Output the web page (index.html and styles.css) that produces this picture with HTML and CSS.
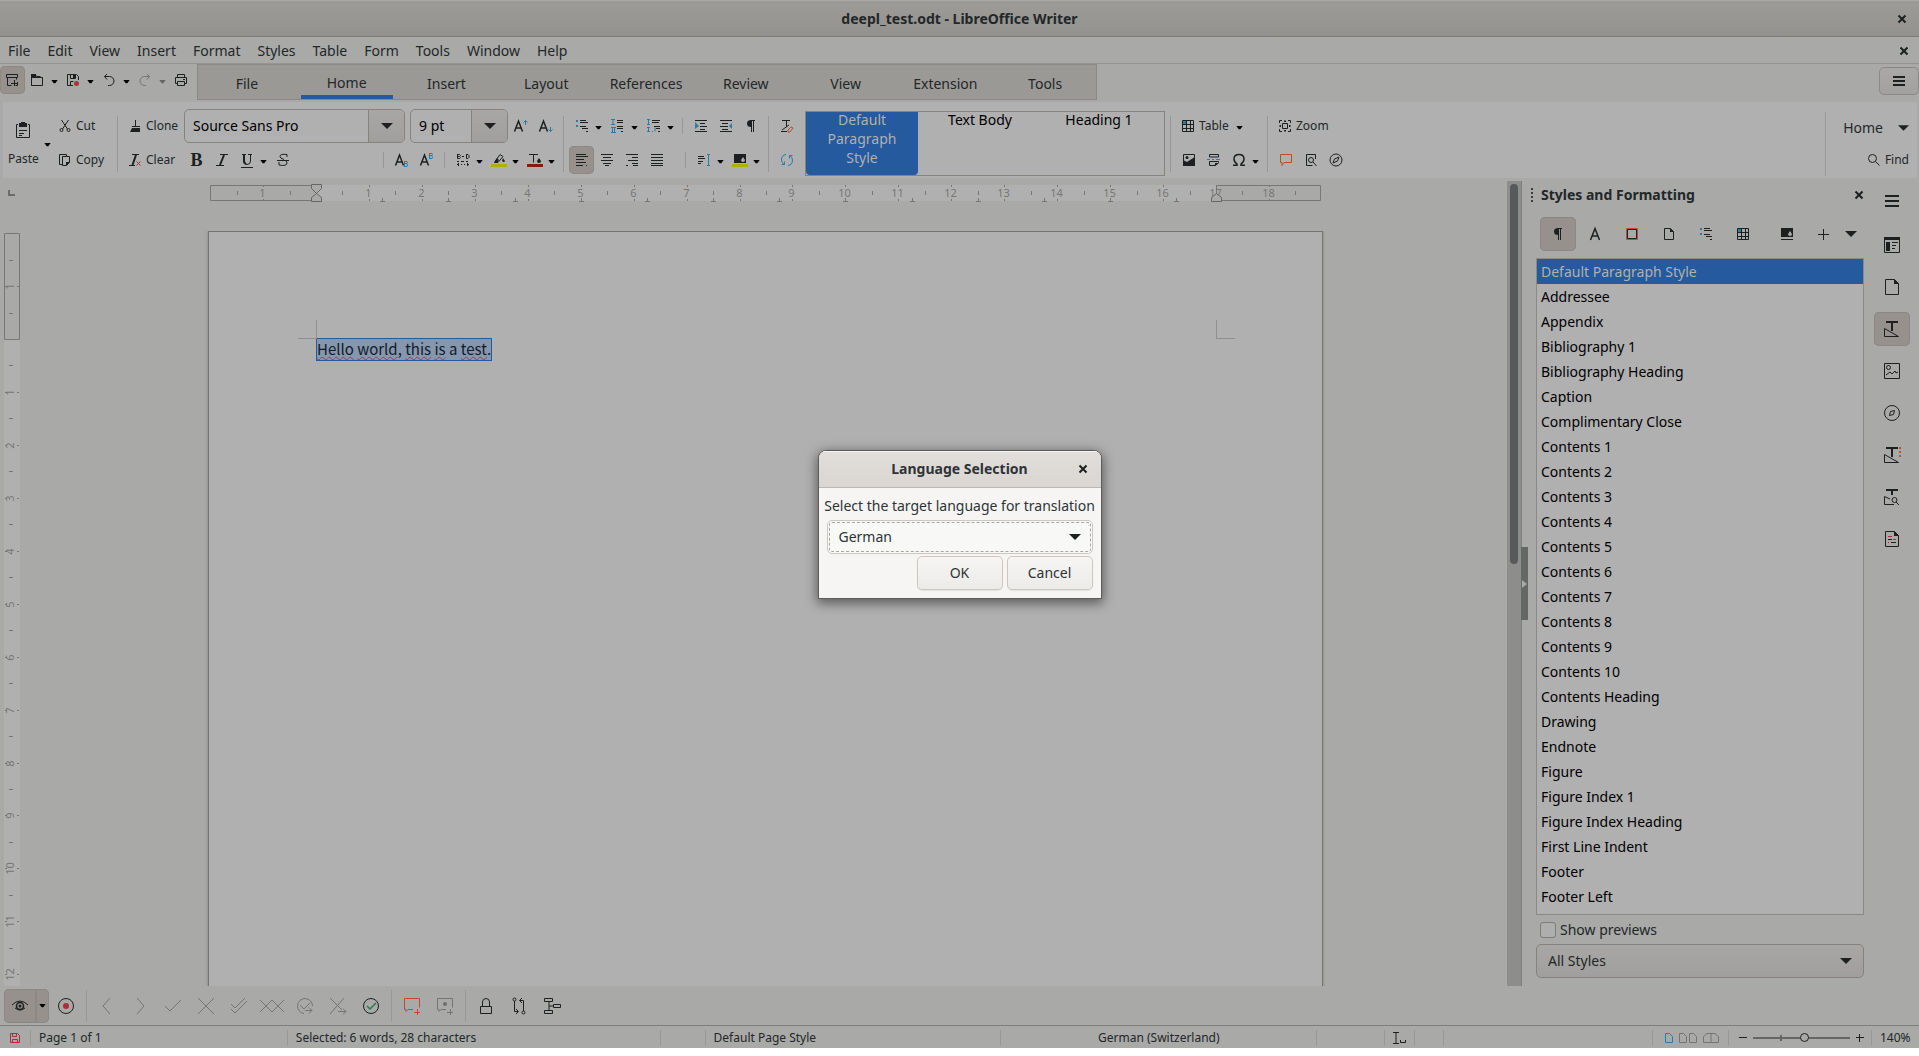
FILE: index.html
```html
<!DOCTYPE html>
<html lang="en">
<head>
<meta charset="utf-8">
<meta name="viewport" content="width=device-width, initial-scale=1">
<title>deepl_test.odt - LibreOffice Writer</title>
<link rel="stylesheet" href="styles.css">
</head>
<body>
<svg class="defs" aria-hidden="true">
  <symbol id="caret" viewBox="0 0 8 5"><path class="k" d="M0 0h8L5 4H3z"/></symbol>
  <symbol id="down" viewBox="0 0 12 6"><path class="f" d="M0 0h12L6 6z"/></symbol>
  <symbol id="close" viewBox="0 0 10 10"><path class="w2" d="M1.500 1.500l7 7M8.500 1.500l-7 7"/></symbol>
  <symbol id="menu" viewBox="0 0 14 14"><path class="f" d="M0 1h14v2H0zM0 6h14v2H0zM0 11h14v2H0z"/></symbol>
  <symbol id="menu-s" viewBox="0 0 12 12"><path class="f" d="M0 1h12v2H0zM0 5h12v2H0zM0 9h12v2H0z"/></symbol>
  <symbol id="new" viewBox="0 0 16 16"><path class="s" d="M2.500 2.500h11v3h-11zM3.500 5.500v8h4M12.500 5.500v2M7 11.500h6M10.500 8v6M13.500 10v3.500h-2"/></symbol>
  <symbol id="open" viewBox="0 0 16 16"><path class="s" d="M2.500 13.500v-11h4l1 2h4M2.500 5.500h11v8h-11z"/><path class="f" d="M2 2h5v3H2z"/></symbol>
  <symbol id="save" viewBox="0 0 16 16"><path class="s" d="M8 13.500H2.500v-11h9l2 2V8M5.500 2.500v4h5v-4M5.500 13.500v-4h3"/><path class="f" d="M8 3h2v3H8z"/><circle cx="11.500" cy="11.500" r="2.500" fill="#b0303c"/></symbol>
  <symbol id="undo" viewBox="0 0 16 16"><path class="s" d="M6 2L3.500 4.500 6 7.500M3.500 4.500h5a4.500 4.500 0 0 1 0 9H7"/></symbol>
  <symbol id="redo" viewBox="0 0 16 16"><path class="g" d="M10 2l2.500 2.500L10 7.500M12.500 4.500h-5a4.500 4.500 0 0 0 0 9H9"/></symbol>
  <symbol id="print" viewBox="0 0 16 16"><path class="s" d="M4.500 5.500v-3h7v3M4.500 11.500h-2v-6h11v6h-2M4.500 9.500h7v4h-7z"/><path class="f" d="M10 7h2v1h-2z"/></symbol>
  <symbol id="paste" viewBox="0 0 16 18"><path class="s" d="M3 3.500H1.500v13h13v-13H13M4 9.500h8M4 12.500h5M4 14.500h3"/><path class="f" d="M4 2h2V1h4v1h2v4H4z"/></symbol>
  <symbol id="cut" viewBox="0 0 16 16"><path class="s" d="M4.500 2l6 9M11.500 2l-6 9"/><circle class="s" cx="4.500" cy="12" r="1.500"/><circle class="s" cx="11.500" cy="12" r="1.500"/></symbol>
  <symbol id="copy" viewBox="0 0 16 16"><path class="s" d="M5 12.500H2.500v-10h7V5M5.500 4.500h7v6l-3 3h-4z"/><path class="f" d="M9 10h4l-4 4z"/></symbol>
  <symbol id="clone" viewBox="0 0 16 16"><path class="s" d="M8.500 2v6M5 8.500h8"/><path class="f" d="M5 10h8v4H3z"/></symbol>
  <symbol id="clear" viewBox="0 0 16 16"><path class="s" d="M5 2.500h7M2 13.500h6"/><path class="w2" d="M9 3L5.500 13"/><path class="r" d="M9.500 9.500l4 4M13.500 9.500l-4 4"/></symbol>
  <symbol id="italic" viewBox="0 0 16 16"><path class="s" d="M6 2.500h8M2 13.500h8"/><path class="w2" d="M10 3L6 13"/></symbol>
  <symbol id="underline" viewBox="0 0 16 16"><path class="s" d="M2 15.500h12M3 2.500h4M9 2.500h4M11.500 2.500V9q0 3.500-3.500 3.500T4.500 9"/><path class="w2" d="M5 3v6q0 2 2 3"/></symbol>
  <symbol id="strike" viewBox="0 0 16 16"><path class="s" d="M2 8.500h12M12 5V2.500q-7-1-7 2 0 2 4 3M4 10v3q8 1.500 8-2 0-1-1-2"/></symbol>
  <symbol id="spacing" viewBox="0 0 16 16"><path class="s" d="M2.500 2v4.500h2l1-1-1-1 1-1-1-1h-2M3 4.500h1M7 4.500h2M11.500 2v4.500h1.500l1-1v-2l-1-1h-2M2 9.500h2M6 9.500h3M11 9.500h2M4 12.500H2M3.500 11v3M6 12.500h1M9 12.500h1M12 12.500h2M12.500 11v3"/></symbol>
  <symbol id="hilite" viewBox="0 0 16 16"><path class="s" d="M4 9.500l5-7 3 2-5 6H4z"/><path class="f" d="M4 9l2-3 2 2-2 3H3zM12 6l2 3q-1 2-3 0z"/><path d="M0 12h16v3H0z" fill="#b0b000"/></symbol>
  <symbol id="fcolor" viewBox="0 0 16 16"><path class="s" d="M2 2.500h9M6.500 2.500v8"/><path class="f" d="M12 6l2 3q0 2-2 2t-2-2z"/><path d="M0 12h16v3H0z" fill="#8a1814"/></symbol>
  <symbol id="list" viewBox="0 0 16 16"><path fill="#2a7ba5" d="M2 2h2v2H2zM2 7h2v2H2z"/><path class="s" d="M6 2.500h6M6 4.500h8M6 8.500h6M8 10.500h6M12 13.500h2"/></symbol>
  <symbol id="numbers" viewBox="0 0 16 16"><path class="bl" d="M1 1.500h4M3 2v4M1 6.500h4M1 9.500h5M2.500 10v4M4.500 10v4M1 14.500h5"/><path class="s" d="M7 2.500h6M7 4.500h6M7 8.500h6M7 10.500h6M11 13.500h2"/></symbol>
  <symbol id="outline" viewBox="0 0 16 16"><path class="bl" d="M1 1.500h3M2.500 2v4M1 6.500h3M1 9.500h3M2.500 10v4M1 13.500h3M6 13.500h1M9 9.500v4"/><path class="s" d="M6 2.500h8M6 4.500h7M8 8.500h6M10 10.500h4M12 13.500h2"/></symbol>
  <symbol id="indent" viewBox="0 0 16 16"><path class="s" d="M2 2.500h12M7 5.500h5M7 8.500h7M7 11.500h5M2 13.500h12"/><path fill="#2a7ba5" d="M2 4l4 4-4 3z"/></symbol>
  <symbol id="outdent" viewBox="0 0 16 16"><path class="s" d="M2 2.500h12M4 5.500h6M2 8.500h8M4 11.500h6M2 13.500h12"/><path fill="#2a7ba5" d="M14 5l-3 3 3 3z"/></symbol>
  <symbol id="pilcrow" viewBox="0 0 16 16"><path class="f" d="M8 2h4v1h-1v11h-1V3H9v11H8V9Q4 9 4 5.500T8 2z"/></symbol>
  <symbol id="unstyle" viewBox="0 0 16 16"><path class="s" d="M3 2.500h8M7.500 3v6M2 13.500h6M3 12l7-5"/><path class="or" d="M9 12l3-3 2 1-3 4H9z"/></symbol>
  <symbol id="refresh" viewBox="0 0 16 16"><path class="bl" d="M7 2.500Q2.500 3 2.500 8q0 3 3 4.500M2.500 12.500h3v-3M9 13.500q4.500-.5 4.500-5.500 0-3-3-4.500M13.500 3.500h-3v3"/></symbol>
  <symbol id="al" viewBox="0 0 16 16"><path class="s" d="M2 2.500h10M2 4.500h12M2 7.500h8M2 10.500h10M2 13.500h7M12 13.500h1"/></symbol>
  <symbol id="ac" viewBox="0 0 16 16"><path class="s" d="M2 2.500h12M4 5.500h8M2 8.500h12M4 11.500h8M6 13.500h4"/></symbol>
  <symbol id="ar" viewBox="0 0 16 16"><path class="s" d="M2 2.500h12M8 5.500h6M4 8.500h10M8 11.500h6M2 13.500h2M9 13.500h5"/></symbol>
  <symbol id="aj" viewBox="0 0 16 16"><path class="s" d="M2 2.500h12M2 5.500h12M2 8.500h12M2 11.500h12M2 13.500h12"/></symbol>
  <symbol id="lsp" viewBox="0 0 16 16"><path class="s" d="M2 4.500h6M2 6.500h7M2 9.500h5M2 11.500h3"/><path class="bl" d="M12.500 3v10M11 2.500h3M11 13.500h3"/></symbol>
  <symbol id="bgc" viewBox="0 0 16 16"><path class="f" d="M2 2h12v9H2z"/><path d="M11 5l2 3q0 2-2 2t-2-2z" fill="#aaa"/><path d="M0 12h16v3H0z" fill="#b0b000"/></symbol>
  <symbol id="fill" viewBox="0 0 16 16"><path class="f" d="M2 2h12v9H2zM2 13h12v1H2z"/><path d="M11 5l2 3q0 2-2 2t-2-2z" fill="#aaa"/></symbol>
  <symbol id="table" viewBox="0 0 16 16"><path d="M3 3h3v3H3z" fill="#2a7ba5"/><path class="s" d="M2.500 2.500h11v11h-11zM2 6.500h12M2 10.500h12M6.500 2v12M10.500 2v12"/></symbol>
  <symbol id="image" viewBox="0 0 16 16"><path class="s" d="M2.500 2.500h11v11h-11z"/><path class="f" d="M2 14V8l4 2 3-2 5-3v9z"/><circle class="f" cx="6" cy="5.500" r="1.500"/></symbol>
  <symbol id="pagebreak" viewBox="0 0 16 16"><path class="s" d="M3.500 5V2.500h9V5h-9M3.500 13.500v-4h9v1l-3 3z"/><path class="f" d="M9 11h4l-4 3z"/><path class="bl" d="M1 7.500h3M6 7.500h2M10 7.500h4"/></symbol>
  <symbol id="omega" viewBox="0 0 16 16"><path class="s2" d="M2 13.250h4V12Q3 10 3 7q0-4.500 5-4.500T13 7q0 3-3 5v1.250h4"/></symbol>
  <symbol id="zoompage" viewBox="0 0 16 16"><path class="s" d="M2.500 5V2.500H5M11 2.500h2.500V5M13.500 11v2.500H11M5 13.500H2.500V11M5.500 5.500h5v5h-5zM8 2v1M7 3.500h2M8 13v1M7 12.500h2M2 8h1M3.500 7v2M13 8h1M12.500 7v2"/></symbol>
  <symbol id="comment" viewBox="0 0 16 16"><path class="or" d="M2.500 2.500h11v8H6l-2 3v-3H2.500z"/></symbol>
  <symbol id="findpage" viewBox="0 0 16 16"><path class="s" d="M12.500 7V2.500h-9v11h6"/><circle class="s" cx="8" cy="8" r="2.500"/><path class="s" d="M10 10l3.500 4"/></symbol>
  <symbol id="compass" viewBox="0 0 16 16"><circle class="s" cx="8" cy="8" r="6"/><path class="s" d="M11 5L9.500 9 5 11l1.500-4z"/></symbol>
  <symbol id="search" viewBox="0 0 16 16"><circle class="s" cx="6.500" cy="6.500" r="4"/><path class="s" d="M9.500 9.500l4 4"/></symbol>
  <symbol id="letter" viewBox="0 0 16 16"><path class="s2" d="M3.500 14L8 2.500 12.500 14M5 10h6"/></symbol>
  <symbol id="frame" viewBox="0 0 16 16"><path class="or" d="M2.500 2.500h11v11h-11z"/><path class="s" d="M3.500 3.500h9v9h-9z"/></symbol>
  <symbol id="page" viewBox="0 0 16 16"><path class="s" d="M3.500 2.500h6l3 3v8h-9z"/><path class="f" d="M9 2l4 4H9z"/></symbol>
  <symbol id="plus" viewBox="0 0 16 16"><path class="s" d="M2 8.500h11M7.500 3v11"/></symbol>
  <symbol id="t-props" viewBox="0 0 16 16"><path class="s" d="M.5 .5h15v15H.5zM8 5.500h6M8 8.500h4M8 11.500h3"/><path class="f" d="M0 0h16v3H0zM2 5h4v9H2z"/></symbol>
  <symbol id="t-page" viewBox="0 0 16 16"><path class="s" d="M1.500 .5h9l4 4v11h-13z"/><path class="f" d="M10 0l5 5h-5z"/></symbol>
  <symbol id="t-style" viewBox="0 0 16 16"><path class="f" d="M2 0h12v2H9v8H7V2H2z"/><path class="s" d="M.5 15.500v-8l14 8z"/></symbol>
  <symbol id="t-image" viewBox="0 0 16 16"><path class="s" d="M.5 .5h15v15H.5zM2 12l4-3 2 2 3-3 1 2 2-1"/><circle class="s" cx="4.500" cy="4.500" r="2"/></symbol>
  <symbol id="t-nav" viewBox="0 0 16 16"><circle class="s" cx="8" cy="8" r="7.500"/><path class="s" d="M10.500 5.500l-1 4-4 1 1-4z"/></symbol>
  <symbol id="t-inspect" viewBox="0 0 18 16"><path class="f" d="M2 0h12v2H9v8H7V2H2z"/><path class="s" d="M.5 15.500v-8l14 8z"/><path fill="#b0583c" d="M15 0h2v2h-2zM15 4h2v2h-2zM15 8h2v2h-2z"/></symbol>
  <symbol id="t-find" viewBox="0 0 16 16"><path class="f" d="M2 0h12v2H9v4H7V2H2z"/><path class="s" d="M6 10L.5 7.500v8H10M12 13l3 3"/><circle class="s" cx="10.500" cy="11" r="2.500"/></symbol>
  <symbol id="t-changes" viewBox="0 0 16 16"><path class="s" d="M1.500 .5h9l4 4v11h-13zM4 8.500h4M7 11.500h5"/><path class="f" d="M10 0l5 5h-5z"/><path class="r" d="M4 5.500h4M9 8.500h3M4 11.500h1"/></symbol>
  <symbol id="eye" viewBox="0 0 18 18"><path class="s" d="M1 8q8-8 16 0M4 11q5 4 10 0"/><circle class="s2" cx="9" cy="9" r="3.500"/><circle class="f" cx="9" cy="9" r="1.500"/></symbol>
  <symbol id="record" viewBox="0 0 18 18"><circle class="s" cx="9" cy="9" r="7.500"/><circle cx="9" cy="9" r="3" fill="#a8303a"/></symbol>
  <symbol id="prev" viewBox="0 0 18 18"><path class="g" d="M12 1L5 9l7 8"/></symbol>
  <symbol id="next" viewBox="0 0 18 18"><path class="g" d="M6 1l7 8-7 8"/></symbol>
  <symbol id="check" viewBox="0 0 18 18"><path class="g" d="M1 9l5 5L17 3"/></symbol>
  <symbol id="cross" viewBox="0 0 18 18"><path class="g" d="M1 1l16 16M17 1L1 17"/></symbol>
  <symbol id="checks" viewBox="0 0 18 18"><path class="g" d="M1 7l4 4L15 1M1 12l4 4L17 4"/></symbol>
  <symbol id="crosses" viewBox="0 0 26 18"><path class="g" d="M1 3l12 12M13 3L1 15M13 3l12 12M25 3L13 15"/></symbol>
  <symbol id="checknext" viewBox="0 0 18 18"><path class="g" d="M8 16.500A7.500 7.500 0 1 1 16.500 9M4 8l4 4 6-6M9 13.500h7M13 10.500l3 3-3 3"/></symbol>
  <symbol id="crossnext" viewBox="0 0 18 18"><path class="g" d="M1 1l12 12M15 1L1 17M9 14.500h8M14 11.500l3 3-3 3"/></symbol>
  <symbol id="accept" viewBox="0 0 18 18"><circle class="s" cx="9" cy="9" r="7.500"/><path d="M5 9l3 3 6-6" fill="none" stroke="#267a4a" stroke-width="1.500"/></symbol>
  <symbol id="addcomment" viewBox="0 0 18 18"><path class="or" d="M10 12.500H5l-2 2v-2H1.500v-11h15v9M11 15.500h6M14.500 12v6"/></symbol>
  <symbol id="addcomment2" viewBox="0 0 18 18"><path class="g" d="M10 12.500H5l-2 2v-2H1.500v-11h15v9M11 15.500h6M14.500 12v6"/><circle cx="9" cy="7" r="2" fill="#6e6e6d"/></symbol>
  <symbol id="lock" viewBox="0 0 18 18"><path class="s" d="M3.500 9.500h11v7h-11zM5.500 9V5q0-3.500 3.500-3.500T12.500 5v4"/></symbol>
  <symbol id="compare" viewBox="0 0 18 18"><path class="s" d="M4.500 4v10.500H8M6 12l2.500 2.500L6 17M13.500 14V3.500H10M12 1L9.500 3.500 12 6"/><circle class="s" cx="4.500" cy="2.500" r="1.500"/><circle class="s" cx="13.500" cy="15.500" r="1.500"/></symbol>
  <symbol id="merge" viewBox="0 0 18 18"><path class="s" d="M1.500 1.500h8v3h-8zM1.500 13.500h8v3h-8zM6 4.500v9M6 9h4M10.500 7.500h7v3h-7z"/></symbol>
  <symbol id="s-save" viewBox="0 0 12 12"><path class="r" d="M1.500 1.500h7l2 2v7h-9zM3.500 1.500v3h4v-3M3.500 10.500v-3h5v3"/></symbol>
  <symbol id="s-insert" viewBox="0 0 16 12"><path class="s" d="M1 .5h6M4 .5v11M1 11.500h6M8.500 8v2.500h5V8"/></symbol>
  <symbol id="v-one" viewBox="0 0 8 10"><path d="M.5 .5h4l3 3v6h-7z" fill="none" stroke="#2a7ba5"/></symbol>
  <symbol id="v-two" viewBox="0 0 18 10"><path class="g" d="M.5 .5h4l3 3v6h-7zM10.500 .5h4l3 3v6h-7z"/></symbol>
  <symbol id="v-book" viewBox="0 0 16 10"><path class="g" d="M8 .5H4l-3.500 3v6h15v-6L12 .5zM8 .5v9"/></symbol>
</svg>

<div class="app">
  <header class="titlebar">
    <h1>deepl_test.odt - LibreOffice Writer</h1>
    <button class="x" aria-label="Close window"><svg><use href="#close"/></svg></button>
  </header>

  <nav class="menubar">
    <button>File</button><button>Edit</button><button>View</button><button>Insert</button><button>Format</button><button>Styles</button><button>Table</button><button>Form</button><button>Tools</button><button>Window</button><button>Help</button>
    <button class="x" aria-label="Close document"><svg><use href="#close"/></svg></button>
  </nav>

  <div class="tabrow">
    <div class="quick">
      <button class="ib on" aria-label="New"><svg><use href="#new"/></svg></button>
      <button class="ib" aria-label="Open"><svg><use href="#open"/></svg></button><button class="dd" aria-label="Open options"><svg><use href="#caret"/></svg></button>
      <button class="ib" aria-label="Save"><svg><use href="#save"/></svg></button><button class="dd" aria-label="Save options"><svg><use href="#caret"/></svg></button>
      <button class="ib" aria-label="Undo"><svg><use href="#undo"/></svg></button><button class="dd" aria-label="Undo list"><svg><use href="#caret"/></svg></button>
      <button class="ib" aria-label="Redo"><svg><use href="#redo"/></svg></button><button class="dd off" aria-label="Redo list"><svg><use href="#caret"/></svg></button>
      <button class="ib" aria-label="Print"><svg><use href="#print"/></svg></button>
    </div>
    <div class="tabs">
      <button>File</button><button class="cur">Home</button><button>Insert</button><button>Layout</button><button>References</button><button>Review</button><button>View</button><button>Extension</button><button>Tools</button>
    </div>
    <button class="hamb" aria-label="Menu"><svg><use href="#menu-s"/></svg></button>
  </div>

  <section class="ribbon">
    <div class="paste">
      <button class="pastebtn"><svg><use href="#paste"/></svg><span>Paste</span></button>
      <button class="dd" aria-label="Paste options"><svg><use href="#caret"/></svg></button>
    </div>
    <div class="grp clip">
      <div class="row"><button class="tb"><svg><use href="#cut"/></svg>Cut</button></div>
      <div class="row"><button class="tb"><svg><use href="#copy"/></svg>Copy</button></div>
    </div>
    <i class="sep"></i>
    <div class="grp fmt">
      <div class="row"><button class="tb"><svg><use href="#clone"/></svg>Clone</button></div>
      <div class="row"><button class="tb"><svg><use href="#clear"/></svg>Clear</button></div>
    </div>
    <div class="grp">
      <div class="row">
        <div class="combo name"><input aria-label="Font name" value="Source Sans Pro"><button aria-label="Font list"><svg><use href="#down"/></svg></button></div>
        <div class="combo size"><input aria-label="Font size" value="9 pt"><button aria-label="Size list"><svg><use href="#down"/></svg></button></div>
        <button class="ib" aria-label="Increase size"><svg viewBox="0 0 16 16"><path class="s2" d="M1.500 13.500L5.500 3l4 10.500M3 10h5"/><path class="bl" d="M12.500 7V2.500M10.500 4.500l2-2 2 2"/></svg></button><button class="ib" aria-label="Decrease size"><svg viewBox="0 0 16 16"><path class="s2" d="M1.500 13.500L5.500 3l4 10.500M3 10h5"/><path class="bl" d="M12.500 9v5M10.500 11.500l2 2 2-2"/></svg></button>
      </div>
      <div class="row">
        <button class="ib letter" aria-label="Bold">B</button><button class="ib" aria-label="Italic"><svg><use href="#italic"/></svg></button><button class="ib" aria-label="Underline"><svg><use href="#underline"/></svg></button><button class="dd" aria-label="Underline styles"><svg><use href="#caret"/></svg></button><button class="ib" aria-label="Strikethrough"><svg><use href="#strike"/></svg></button>
        <i class="sep short push"></i>
        <button class="ib" aria-label="Subscript"><svg viewBox="0 0 16 16"><path class="s2" d="M1.500 13.500L5.500 3l4 10.500M3 10h5"/><path class="bl" d="M10.500 9.500h2.500l.5 1-.5 1h-2.500v3H13l.5-1-.5-1.500M10.500 9v6"/></svg></button><button class="ib" aria-label="Superscript"><svg viewBox="0 0 16 16"><path class="s2" d="M1.500 13.500L5.500 3l4 10.500M3 10h5"/><path class="bl" d="M10.500 1.500h2.500l.5 1-.5 1h-2.500v3H13l.5-1-.5-1.500M10.500 1v6"/></svg></button>
        <i class="sep short"></i>
        <button class="ib" aria-label="Spacing"><svg><use href="#spacing"/></svg></button><button class="dd" aria-label="Spacing options"><svg><use href="#caret"/></svg></button><button class="ib" aria-label="Highlight"><svg><use href="#hilite"/></svg></button><button class="dd" aria-label="Highlight colours"><svg><use href="#caret"/></svg></button><button class="ib" aria-label="Font colour"><svg><use href="#fcolor"/></svg></button><button class="dd" aria-label="Font colours"><svg><use href="#caret"/></svg></button>
      </div>
    </div>
    <i class="sep"></i>
    <div class="grp">
      <div class="row">
        <button class="ib" aria-label="Bullets"><svg><use href="#list"/></svg></button><button class="dd" aria-label="Bullet styles"><svg><use href="#caret"/></svg></button><button class="ib" aria-label="Numbering"><svg><use href="#numbers"/></svg></button><button class="dd" aria-label="Numbering styles"><svg><use href="#caret"/></svg></button><button class="ib" aria-label="Outline"><svg><use href="#outline"/></svg></button><button class="dd" aria-label="Outline styles"><svg><use href="#caret"/></svg></button>
        <i class="sep short"></i>
        <button class="ib" aria-label="Increase indent"><svg><use href="#indent"/></svg></button><button class="ib" aria-label="Decrease indent"><svg><use href="#outdent"/></svg></button><button class="ib" aria-label="Formatting marks"><svg><use href="#pilcrow"/></svg></button>
      </div>
      <div class="row">
        <button class="ib on" aria-label="Align left"><svg><use href="#al"/></svg></button><button class="ib" aria-label="Centre"><svg><use href="#ac"/></svg></button><button class="ib" aria-label="Align right"><svg><use href="#ar"/></svg></button><button class="ib" aria-label="Justify"><svg><use href="#aj"/></svg></button>
        <i class="sep short push"></i>
        <button class="ib" aria-label="Line spacing"><svg><use href="#lsp"/></svg></button><button class="dd" aria-label="Line spacing options"><svg><use href="#caret"/></svg></button><button class="ib" aria-label="Background"><svg><use href="#bgc"/></svg></button><button class="dd" aria-label="Background colours"><svg><use href="#caret"/></svg></button>
      </div>
    </div>
    <i class="sep"></i>
    <div class="grp">
      <div class="row"><button class="ib" aria-label="Clear formatting"><svg><use href="#unstyle"/></svg></button></div>
      <div class="row"><button class="ib" aria-label="Update style"><svg><use href="#refresh"/></svg></button></div>
    </div>
    <div class="gallery">
      <button class="sel">Default Paragraph Style</button><button>Text Body</button><button>Heading 1</button>
    </div>
    <i class="sep"></i>
    <div class="grp">
      <div class="row"><button class="tb"><svg><use href="#table"/></svg>Table</button><button class="dd wide" aria-label="Table size"><svg><use href="#caret"/></svg></button></div>
      <div class="row"><button class="ib" aria-label="Image"><svg><use href="#image"/></svg></button><button class="ib" aria-label="Page break"><svg><use href="#pagebreak"/></svg></button><button class="ib" aria-label="Symbol"><svg><use href="#omega"/></svg></button><button class="dd" aria-label="Symbols"><svg><use href="#caret"/></svg></button></div>
    </div>
    <i class="sep"></i>
    <div class="grp">
      <div class="row"><button class="tb"><svg><use href="#zoompage"/></svg>Zoom</button></div>
      <div class="row"><button class="ib" aria-label="Comment"><svg><use href="#comment"/></svg></button><button class="ib" aria-label="Find and replace"><svg><use href="#findpage"/></svg></button><button class="ib" aria-label="Navigator"><svg><use href="#compass"/></svg></button></div>
    </div>
    <div class="grp end">
      <div class="row"><button class="homebtn">Home<svg><use href="#down"/></svg></button></div>
      <div class="row"><button class="tb find"><svg><use href="#search"/></svg>Find</button></div>
    </div>
  </section>

  <main class="work">
    <div class="editor">
      <div class="rulerrow">
        <i class="tabmark"></i>
        <svg id="hruler"></svg>
      </div>
      <div class="canvasrow">
        <svg id="vruler"></svg>
        <div class="canvas">
          <article class="page">
            <i class="mark tl"></i><i class="mark tr"></i>
            <p><u>Hello</u> <u>world</u>, <u>this</u> <u>is</u> a <u>test</u>.</p>
          </article>
        </div>
      </div>
    </div>
    <div class="scroll"><i></i></div>
    <aside class="side">
      <button class="handle" aria-label="Hide sidebar"></button>
      <div class="panel">
        <div class="phead"><i class="grip"></i><h2>Styles and Formatting</h2><button class="x" aria-label="Close sidebar"><svg><use href="#close"/></svg></button></div>
        <div class="ptools">
          <button class="pb on" aria-label="Paragraph styles"><svg><use href="#pilcrow"/></svg></button><button class="pb" aria-label="Character styles"><svg><use href="#letter"/></svg></button><button class="pb" aria-label="Frame styles"><svg><use href="#frame"/></svg></button><button class="pb" aria-label="Page styles"><svg><use href="#page"/></svg></button><button class="pb" aria-label="List styles"><svg><use href="#list"/></svg></button><button class="pb" aria-label="Table styles"><svg><use href="#table"/></svg></button>
          <button class="pb gap" aria-label="Fill format"><svg><use href="#fill"/></svg></button><button class="pb" aria-label="New style"><svg><use href="#plus"/></svg></button><button class="pd" aria-label="Style actions"><svg><use href="#down"/></svg></button>
        </div>
        <ul class="styles">
          <li class="sel">Default Paragraph Style</li><li>Addressee</li><li>Appendix</li><li>Bibliography 1</li><li>Bibliography Heading</li><li>Caption</li><li>Complimentary Close</li><li>Contents 1</li><li>Contents 2</li><li>Contents 3</li><li>Contents 4</li><li>Contents 5</li><li>Contents 6</li><li>Contents 7</li><li>Contents 8</li><li>Contents 9</li><li>Contents 10</li><li>Contents Heading</li><li>Drawing</li><li>Endnote</li><li>Figure</li><li>Figure Index 1</li><li>Figure Index Heading</li><li>First Line Indent</li><li>Footer</li><li>Footer Left</li>
        </ul>
        <label class="prev"><input type="checkbox">Show previews</label>
        <div class="sel-wrap"><select aria-label="Style filter"><option>All Styles</option></select><svg><use href="#down"/></svg></div>
      </div>
      <nav class="deck">
        <button class="db" aria-label="Sidebar settings"><svg class="m"><use href="#menu"/></svg></button>
        <button class="db first" aria-label="Properties"><svg><use href="#t-props"/></svg></button>
        <button class="db" aria-label="Page"><svg><use href="#t-page"/></svg></button>
        <button class="db on" aria-label="Styles"><svg><use href="#t-style"/></svg></button>
        <button class="db" aria-label="Gallery"><svg><use href="#t-image"/></svg></button>
        <button class="db" aria-label="Navigator"><svg><use href="#t-nav"/></svg></button>
        <button class="db" aria-label="Style inspector"><svg class="wd"><use href="#t-inspect"/></svg></button>
        <button class="db" aria-label="Accessibility"><svg><use href="#t-find"/></svg></button>
        <button class="db" aria-label="Changes"><svg><use href="#t-changes"/></svg></button>
      </nav>
    </aside>
  </main>

  <div class="track">
    <button class="show on" aria-label="Show changes"><svg><use href="#eye"/></svg></button><button class="showdd on" aria-label="Show changes options"><svg><use href="#caret"/></svg></button>
    <button aria-label="Record"><svg><use href="#record"/></svg></button><i class="sep"></i>
    <button aria-label="Previous"><svg><use href="#prev"/></svg></button><button aria-label="Next"><svg><use href="#next"/></svg></button><button aria-label="Accept"><svg><use href="#check"/></svg></button><button aria-label="Reject"><svg><use href="#cross"/></svg></button><button aria-label="Accept all"><svg><use href="#checks"/></svg></button><button aria-label="Reject all"><svg class="xx"><use href="#crosses"/></svg></button><button aria-label="Accept and next"><svg><use href="#checknext"/></svg></button><button aria-label="Reject and next"><svg><use href="#crossnext"/></svg></button><button aria-label="Manage"><svg><use href="#accept"/></svg></button><i class="sep"></i>
    <button aria-label="Insert comment"><svg><use href="#addcomment"/></svg></button><button aria-label="Change comment"><svg><use href="#addcomment2"/></svg></button><i class="sep"></i>
    <button aria-label="Protect"><svg><use href="#lock"/></svg></button><button aria-label="Compare"><svg><use href="#compare"/></svg></button><button aria-label="Merge"><svg><use href="#merge"/></svg></button>
  </div>

  <footer class="status">
    <span class="c"><svg class="i12"><use href="#s-save"/></svg></span>
    <span>Page 1 of 1</span>
    <span>Selected: 6 words, 28 characters</span>
    <span></span>
    <span>Default Page Style</span>
    <span class="c">German (Switzerland)</span>
    <span></span>
    <span class="c"><svg class="ins"><use href="#s-insert"/></svg></span>
    <span></span>
    <span></span>
    <span class="views"><svg class="v1"><use href="#v-one"/></svg><svg class="v2"><use href="#v-two"/></svg><svg class="v3"><use href="#v-book"/></svg></span>
    <span class="zoom"><button aria-label="Zoom out"></button><input type="range" min="0" max="100" value="53" aria-label="Zoom"><button class="in" aria-label="Zoom in"></button></span>
    <span>140%</span>
  </footer>

  <div class="modal">
    <form class="dialog">
      <div class="dhead"><h2>Language Selection</h2><button type="button" class="x" aria-label="Close dialog"><svg><use href="#close"/></svg></button></div>
      <div class="dbody">
        <label for="lang">Select the target language for translation</label>
        <div class="sel-wrap focus"><select id="lang"><option>German</option></select><svg><use href="#down"/></svg></div>
        <div class="dbtns"><button type="button">OK</button><button type="button">Cancel</button></div>
      </div>
    </form>
  </div>
</div>
<script src="rulers.js"></script>
</body>
</html>
```
FILE: styles.css
```css
* { box-sizing: border-box; }
:root {
  --bg: #a9a9a7;
  --white: #b0b0b0;
  --ink: #1d2021;
  --text: #222728;
  --line: #8b8985;
  --on: #96918d;
  --blue: #255a9e;
  --icon-blue: #2a7ba5;
}
body { margin: 0; background: #fff; font-family: "Noto Sans", sans-serif; font-size: 14px; line-height: 20px; color: var(--text); }
button, input, select { font: inherit; color: inherit; }
button { border: 0; padding: 0; background: none; }
svg { display: block; flex: none; }
h1, h2 { margin: 0; font-size: 14px; font-weight: 700; }
i { display: block; }
.defs { position: absolute; width: 0; height: 0; }

/* icon strokes */
.s, .s2, .w2, .g, .r, .or, .bl { fill: none; stroke: var(--ink); stroke-width: 1; }
.s2 { stroke-width: 1.5; }
.w2 { stroke-width: 2; }
.f { fill: var(--ink); }
.k { fill: #000; }
.g { stroke: #747473; }
.r { stroke: #a8303a; }
.or { stroke: #b54f30; }
.bl { stroke: var(--icon-blue); }

.app { position: relative; display: flex; flex-direction: column; height: calc(100vh - 8px); min-height: 600px; background: var(--bg); overflow: hidden; }
.x { display: grid; place-items: center; width: 24px; height: 24px; }
.x svg { width: 10px; height: 10px; }

.titlebar { display: grid; grid-template-columns: 32px 1fr 32px; align-items: center; flex: none; height: 37px; border-top: 1px solid #a8a7a3; border-bottom: 1px solid #7e7b77; background: linear-gradient(#9c9b97, #949290); }
.titlebar h1 { grid-column: 2; text-align: center; }
.titlebar .x { margin-left: 3px; }

.menubar { display: flex; align-items: center; flex: none; height: 27px; padding: 1px 3px 0 8px; gap: 17px; border-bottom: 1px solid #959491; }
.menubar .x { margin-left: auto; }

.tabrow { display: flex; flex: none; height: 38px; }
.quick { display: flex; flex: none; width: 197px; padding-top: 2px; }
.ib { width: 25px; height: 28px; padding-left: 4px; flex: none; border-radius: 5px; }
.ib svg { width: 16px; height: 16px; }
.ib.on { background: var(--on); box-shadow: inset 0 0 0 1px #8d8884; }
.dd { width: 11px; height: 28px; padding: 4px 0 0 1px; flex: none; }
.dd svg { width: 7px; height: 4px; }
.off { opacity: .4; }
.tabs { display: flex; flex: 0 1 900px; height: 36px; border: 1px solid var(--line); background: #9b9996; }
.tabs button { flex: 1; margin: 0 5px 0 3px; border-bottom: 4px solid transparent; padding-top: 8px; }
.tabs .cur { border-color: var(--blue); padding-top: 6px; }
.hamb { display: grid; place-items: center; width: 40px; height: 28px; margin: 3px 0 0 auto; border: 1px solid var(--line); border-radius: 5px; background: linear-gradient(#a9a8a6, #a3a19f); }
.hamb svg { width: 12px; height: 12px; }

.ribbon { display: flex; flex: none; height: 76px; margin: 0 2px 0 3px; padding-top: 7px; background: var(--white); }
.ribbon .ib { padding-left: 5px; }
.ribbon .letter { padding-left: 0; font: 700 18px/28px "Liberation Serif", serif; color: var(--ink); }
.grp { display: flex; flex-direction: column; flex: none; }
.row { display: flex; align-items: center; height: 34px; }
.sep { flex: none; width: 11px; height: 56px; margin-top: 7px; background: linear-gradient(#989896, #989896) 5px 0 / 1px 100% no-repeat; }
.sep.short { height: 16px; margin-top: 0; }
.ribbon .push { margin-left: auto; }
.paste { display: flex; align-items: center; width: 50px; height: 68px; }
.pastebtn { display: grid; justify-items: center; gap: 10px; width: 36px; margin: 4px 0 0 -3px; padding-left: 8px; font-size: 12px; }
.pastebtn svg { width: 16px; height: 18px; }
.paste .dd { margin-left: 7px; }
.tb { display: flex; align-items: center; gap: 3px; padding-left: 4px; height: 28px; font-size: 12px; }
.tb svg { width: 16px; height: 16px; }
.clip { width: 59px; }
.fmt { width: 61px; }
.combo { display: flex; height: 34px; border: 1px solid #86837f; border-radius: 5px; overflow: hidden; }
.combo input { flex: 1; min-width: 0; padding: 0 8px; border: 0; background: none; color: #000; }
.combo button { display: grid; place-items: center; width: 36px; border-left: 1px solid #86837f; background: linear-gradient(#a8a7a5, #a19f9d); }
.combo svg { width: 12px; height: 6px; }
.name { width: 221px; margin-right: 5px; }
.size { width: 98px; }
.gallery { display: grid; grid-template-columns: 112px 124px 114px; flex: none; width: 360px; height: 65px; margin: 2px 0 0 6px; border: 1px solid #86837f; overflow: hidden; }
.gallery button { display: flex; justify-content: center; align-items: flex-start; height: 65px; margin-top: -2px; padding: 0 14px; line-height: 19px; color: #000; text-align: center; }
.gallery .sel { background: var(--blue); color: #b0b0b0; border-radius: 0 0 4px 4px; }
.dd.wide { margin-left: 6px; }
.end { margin: 3px 0 0 auto; width: 92px; height: 64px; padding-right: 8px; border-left: 1px solid #989896; }
.end .row { justify-content: flex-end; height: 32px; }
.homebtn { display: flex; align-items: center; gap: 15px; }
.homebtn svg { width: 11px; height: 6px; }

.work { display: flex; flex: 1; min-height: 0; }
.editor { display: flex; flex-direction: column; flex: 1; min-width: 0; overflow: hidden; }
.rulerrow { display: flex; flex: none; height: 53px; padding: 6px 0 0 8px; }
.tabmark { flex: none; width: 7px; height: 6px; margin: 6px 9px 0 0; border: solid #6b6b6a; border-width: 0 0 2px 2px; }
#hruler { width: 1115px; height: 20px; margin: 0 auto; }
.canvasrow { display: flex; flex: 1; min-height: 0; }
#vruler { width: 24px; height: 100%; }
.canvas { flex: 1; overflow: hidden; }
.page { position: relative; width: 1115px; height: 1578px; margin: 0 auto; padding: 106px 107px; background: var(--white); border: 1px solid #737372; box-shadow: 0 0 3px #80807f; }
.page p { width: max-content; margin: 0; padding: 0 1px; height: 23px; background: #8696ad; outline: 1px solid var(--blue); outline-offset: -1px; color: #101c2c; font: 15px/22px "Noto Sans CJK SC", sans-serif; }
.page u { text-decoration: underline wavy #96404e 1px; text-underline-offset: 1px; text-decoration-skip-ink: none; }
.mark { position: absolute; top: 88px; width: 19px; height: 19px; border: solid #8f8f8f; }
.tl { left: 89px; border-width: 0 1px 1px 0; }
.tr { right: 87px; border-width: 0 0 1px 1px; }
.scroll { width: 15px; margin-top: 3px; padding: 3px; background: #8d8d8c; border-right: 1px solid #7f7f7e; }
.scroll i { width: 8px; height: 380px; border-radius: 4px; background: #58595b; }

.side { position: relative; display: flex; flex: none; width: 397px; }
.handle { position: absolute; left: -1px; top: 369px; width: 7px; height: 73px; background: #656765; }
.handle::after { content: ""; display: block; margin-left: 1px; border: solid transparent; border-width: 4px 0 4px 5px; border-left-color: #a9a9a7; }
.panel { display: flex; flex-direction: column; flex: 1; padding: 4px 0 8px 14px; }
.phead { display: flex; align-items: center; flex: none; height: 26px; margin-left: -6px; }
.grip { width: 2px; height: 14px; margin: 0 8px 0 1px; background: repeating-linear-gradient(#3a3d3e 0 2px, transparent 2px 4px); }
.phead .x { width: 10px; margin-left: auto; }
.ptools { display: flex; align-items: center; flex: none; height: 34px; margin: 9px 0 7px 4px; }
.pb { display: grid; place-items: center; width: 36px; height: 34px; margin-right: 1px; flex: none; border-radius: 5px; }
.pb svg { width: 16px; height: 16px; }
.pb.gap { margin-left: 7px; }
.pd { width: 18px; padding-left: 2px; }
.pd svg, .sel-wrap svg { width: 12px; height: 6px; }
.on { background: var(--on); box-shadow: inset 0 0 0 1px #8d8884; }
.styles { flex: 1; min-height: 0; margin: 0; padding: 0; list-style: none; overflow: hidden; border: 1px solid var(--line); background: var(--white); color: #000; }
.styles li { padding-left: 4px; line-height: 25px; }
.styles .sel { background: var(--blue); color: #b0b0b0; }
.prev { display: flex; align-items: center; flex: none; height: 29px; gap: 4px; padding-left: 4px; }
.prev input { appearance: none; width: 16px; height: 16px; margin: 0; border: 1px solid #7f7b77; border-radius: 3px; background: #aeaeae; }
.sel-wrap { display: grid; align-items: center; flex: none; height: 34px; border: 1px solid #86837f; border-radius: 5px; background: linear-gradient(#a8a7a5, #a19f9d); }
.sel-wrap select { grid-area: 1 / 1; appearance: none; width: 100%; height: 32px; padding: 0 11px; border: 0; border-radius: 4px; background: none; }
.sel-wrap svg { grid-area: 1 / 1; justify-self: end; margin-right: 11px; pointer-events: none; }
.deck { display: flex; flex-direction: column; flex: none; width: 55px; padding: 6px 0 0 10px; gap: 8px; }
.db { display: grid; place-items: center; width: 36px; height: 34px; border-radius: 5px; }
.db svg { width: 16px; height: 16px; }
.db .m { width: 14px; height: 14px; }
.db .wd { width: 18px; margin-left: 2px; }
.db.first { margin-top: 2px; }

.track { display: flex; align-items: center; flex: none; height: 40px; padding: 1px 5px 0 4px; border-bottom: 1px solid #7d7d7b; }
.track button { display: grid; place-items: center; width: 33px; height: 34px; }
.track svg { width: 18px; height: 18px; }
.track .show { width: 32px; border-radius: 5px 0 0 5px; }
.track .showdd { width: 13px; border-radius: 0 5px 5px 0; }
.track .showdd svg { width: 7px; height: 4px; }
.track .xx { width: 26px; }
.track .sep { width: 8px; height: 32px; margin: 0; background-position-x: 4px; }

.status { display: grid; grid-template-columns: 31px 257fr 373fr 45fr 296fr 316fr 68fr 30fr 29fr 209fr 76px 143px 47px; align-items: center; flex: none; height: 22px; padding-top: 1px; font-size: 12px; }
.status > span { display: flex; align-items: center; height: 16px; padding-left: 8px; border-right: 1px solid #989896; white-space: nowrap; }
.status > span:last-child { border: 0; }
.status > .c { justify-content: center; padding: 0; }
.i12 { width: 12px; height: 12px; }
.ins { width: 16px; height: 12px; }
.status .views { gap: 6px; padding-left: 12px; }
.v1 { width: 8px; height: 10px; }
.v2 { width: 18px; height: 10px; }
.v3 { width: 16px; height: 10px; }
.status .zoom { gap: 6px; padding-left: 10px; }
.zoom button { width: 8px; height: 8px; background: linear-gradient(var(--ink), var(--ink)) 0 3px / 8px 1px no-repeat; }
.zoom .in { background: linear-gradient(var(--ink), var(--ink)) 0 3px / 8px 1px no-repeat, linear-gradient(var(--ink), var(--ink)) 3px 0 / 1px 8px no-repeat; }
.zoom input { appearance: none; width: 97px; height: 10px; margin: 0; background: linear-gradient(#656765, #656765) 0 4px / 100% 2px no-repeat, linear-gradient(#656765, #656765) 27px 2px / 2px 6px no-repeat; }
.zoom input::-webkit-slider-thumb { appearance: none; width: 9px; height: 9px; border: 1px solid var(--ink); border-radius: 50%; background: var(--bg); }

.modal { position: absolute; inset: 0; display: grid; place-items: center; }
.dialog { width: 284px; border: 1px solid #5c5c5b; border-radius: 8px 8px 0 0; background: #f6f5f4; color: #2e3436; overflow: hidden; box-shadow: 0 3px 12px 1px rgba(0, 0, 0, .5); }
.dhead { display: grid; grid-template-columns: 36px 1fr 36px; align-items: center; height: 37px; border-bottom: 1px solid #bfb8b1; background: linear-gradient(#e1dedb, #dad6d2); box-shadow: inset 0 1px #f6f5f4; }
.dhead h2 { grid-column: 2; text-align: center; }
.dhead .x { justify-self: center; }
.dbody { display: flex; flex-direction: column; padding: 8px; white-space: nowrap; }
.dbody label { display: flex; justify-content: center; height: 24px; line-height: 20px; }
.focus { border-color: #cdc7c2; background: #f8f8f7; }
.focus select { outline: 1px dashed #a6a8a8; outline-offset: -2px; }
.dbtns { display: flex; justify-content: flex-end; gap: 4px; margin-top: 2px; }
.dbtns button { width: 86px; height: 34px; border: 1px solid #cdc7c2; border-radius: 5px; background: linear-gradient(#f6f5f4, #edebe9); box-shadow: 0 1px 1px rgba(0, 0, 0, .08); }

/* rulers */
.rt { fill: #777776; font: 11px "Noto Sans", sans-serif; text-anchor: middle; }
.rl { fill: none; stroke: #777776; }
.rw { fill: #b0b0b0; }
.rm { fill: #a9a9a7; stroke: #666; }
```
FILE: rulers.js
```js
const CM = 52.94;
const tick = (x1, y1, x2, y2) => `<path class="rl" d="M${x1} ${y1}L${x2} ${y2}"/>`;

function horizontal() {
  const zero = 108.5;
  const end = Math.floor(zero + 17 * CM) + 0.5;
  let out = `<rect class="rw" x="108" y="1" width="900" height="16"/>`;
  out += `<path class="rl" d="M${zero} 1.5H2.5v15H${zero}M${end} 1.5H1112.5v15H${end}z"/>`;
  for (let h = -3; h <= 37; h++) {
    if (h === 0) continue;
    const x = Math.floor(zero + h * CM / 2) + 0.5;
    if (h % 2) {
      out += tick(x, 7, x, 11);
    } else {
      out += tick(x, 1, x, 3) + tick(x, 15, x, 17);
      out += `<text class="rt" x="${x - 1}" y="13">${Math.abs(h / 2)}</text>`;
    }
  }
  for (let t = 1; t < 14; t++) {
    const x = Math.floor(zero + t * 1.25 * CM) + 0.5;
    out += tick(x, 14, x, 18) + tick(x - 2.5, 17.5, x + 2.5, 17.5);
  }
  out += `<path class="rm" d="M103.500 .5h10v4l-5 5-5-5zM108.500 9.500l5 4v4h-10v-4z"/>`;
  out += `<path class="rm" d="M${end} 9.500l5 4v4h-10v-4z"/>`;
  return out;
}

function vertical() {
  const zero = 108.5;
  let out = `<rect class="rw" x="4" y="108" width="16" height="1000"/>`;
  out += `<path class="rl" d="M4.500 2.500h15v106h-15z"/>`;
  for (let h = -3; h <= 26; h++) {
    if (h === 0) continue;
    const y = Math.floor(zero + h * CM / 2) + 0.5;
    if (h % 2) {
      out += tick(9, y, 13, y);
    } else {
      out += tick(5, y, 7, y) + tick(17, y, 19, y);
      out += `<text class="rt" transform="translate(14 ${y}) rotate(-90)">${Math.abs(h / 2)}</text>`;
    }
  }
  return out;
}

document.getElementById("hruler").innerHTML = horizontal();
document.getElementById("vruler").innerHTML = vertical();
```
